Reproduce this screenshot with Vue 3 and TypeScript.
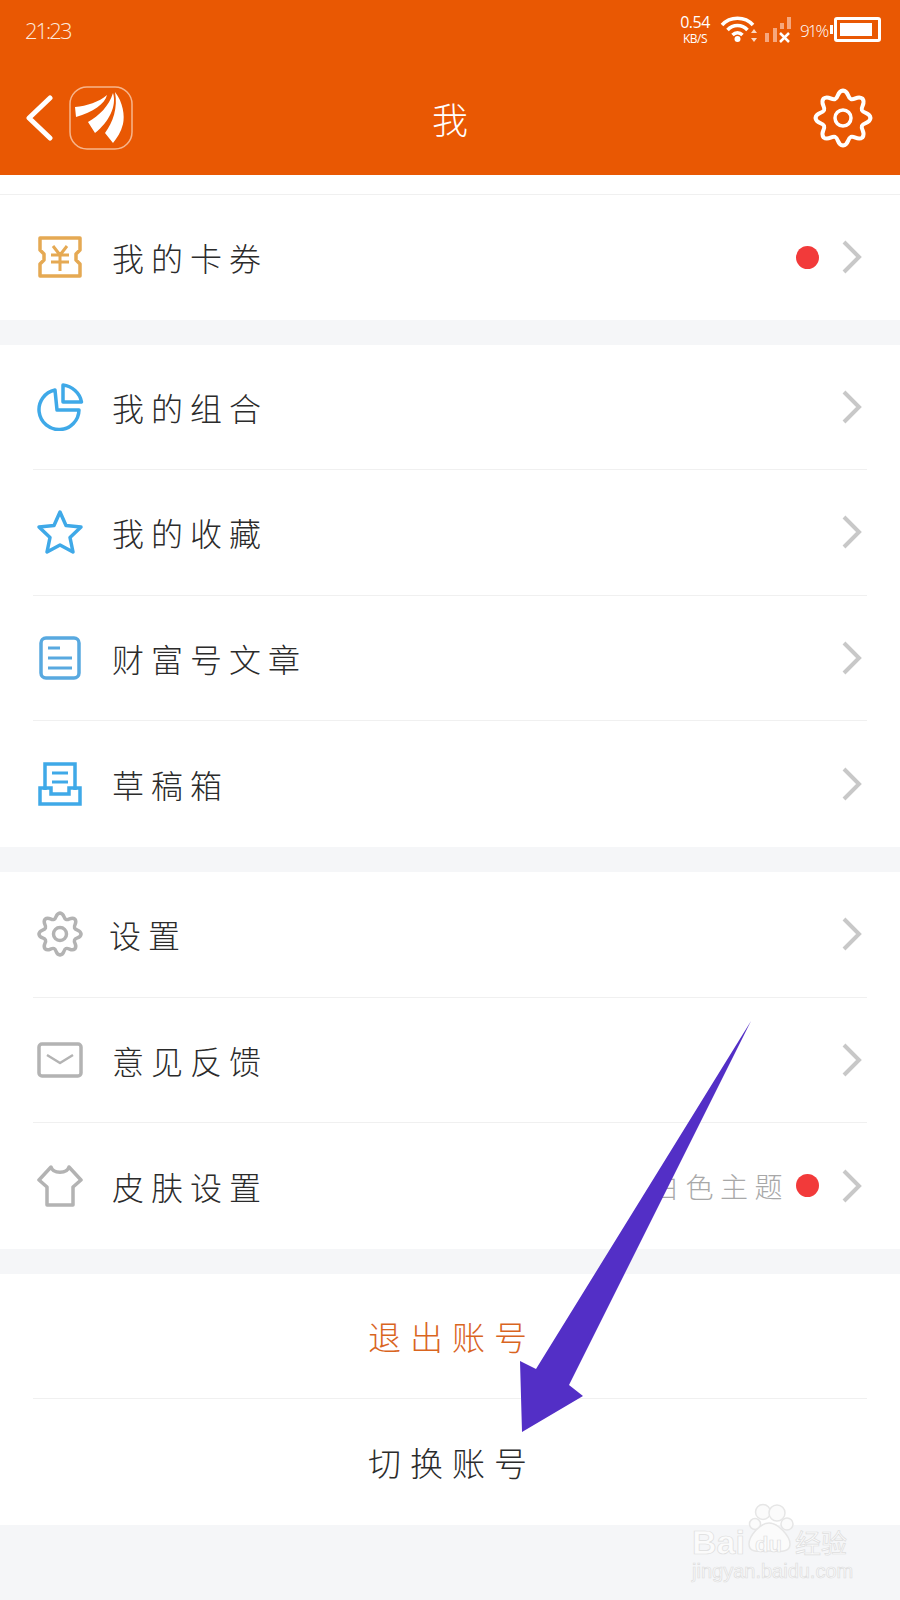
<script setup lang="ts">
interface Row {
  label: string;
  icon: string;
  dot?: boolean;
  note?: string;
}

const groups: Row[][] = [
  [{ label: '我的卡券', icon: 'ticket', dot: true }],
  [
    { label: '我的组合', icon: 'pie' },
    { label: '我的收藏', icon: 'star' },
    { label: '财富号文章', icon: 'doc' },
    { label: '草稿箱', icon: 'inbox' }
  ],
  [
    { label: '设置', icon: 'gear' },
    { label: '意见反馈', icon: 'mail' },
    { label: '皮肤设置', icon: 'shirt', note: '白色主题', dot: true }
  ]
];

// 8 lobe rounded gear, centred on 0,0 in a -30..30 box
const gearPath = (() => {
  const p = (a: number, r: number) =>
    `${(r * Math.cos(a)).toFixed(2)} ${(r * Math.sin(a)).toFixed(2)}`;
  let d = '';
  for (let i = 0; i < 8; i++) {
    const a = (i * Math.PI) / 4 - Math.PI / 2;
    d += i === 0 ? `M${p(a - 0.39, 20.5)}` : `L${p(a - 0.39, 20.5)}`;
    d += `C${p(a - 0.2, 21)} ${p(a - 0.22, 27.5)} ${p(a, 27.5)}`;
    d += `C${p(a + 0.22, 27.5)} ${p(a + 0.2, 21)} ${p(a + 0.39, 20.5)}`;
  }
  return d + 'Z';
})();
</script>

<template>
  <div class="page">
    <header class="head">
      <div class="status">
        <span class="time">21:23</span>
        <div class="status-right">
          <div class="speed"><span>0.54</span><span class="unit">KB/S</span></div>
          <svg class="wifi" width="38" height="28" viewBox="0 0 38 28">
            <path d="M2 10C10 1 25 1 33 10M7.500 15C13 9 22 9 27.500 15M12.500 20C15.500 17 19.500 17 22.500 20" fill="none" stroke="#fff" stroke-width="3.500" />
            <circle cx="17.500" cy="24" r="3" fill="#fff" />
            <path d="M34 14l3 4h-6zM34 27l3-4h-6z" fill="#fbd9c4" />
          </svg>
          <svg class="signal" width="28" height="26" viewBox="0 0 28 26">
            <rect x="1" y="16" width="4" height="9" fill="#f6a77e" />
            <rect x="9" y="11" width="4" height="14" fill="#f6a77e" />
            <rect x="16" y="6" width="4" height="6" fill="#f6a77e" />
            <rect x="23" y="0" width="4" height="12" fill="#f6a77e" />
            <path d="M16 16l9 9M25 16l-9 9" stroke="#fff" stroke-width="2.500" />
          </svg>
          <span class="pct">91%</span>
          <div class="battery"><i class="level"></i></div>
        </div>
      </div>
      <nav class="nav">
        <div class="nav-left">
          <svg width="30" height="46" viewBox="0 0 30 46">
            <path d="M26 3L5 23l21 20" fill="none" stroke="#fff" stroke-width="5" stroke-linecap="round" stroke-linejoin="round" />
          </svg>
          <svg class="logo" width="64" height="64" viewBox="0 0 64 64">
            <rect x="1" y="1" width="62" height="62" rx="17" fill="none" stroke="#f7b58c" stroke-width="1.500" />
            <path d="M6 21C18 20 30 16 38 9C36 18 24 26 7 31Z" fill="#fff" />
            <path d="M19 36C30 30 40 20 44 7C48 20 40 36 26 47Z" fill="#fff" />
            <path d="M36 47C44 36 49 22 46 6C54 16 56 30 54 38C52 46 48 52 44 57Z" fill="#fff" />
          </svg>
        </div>
        <span class="title">我</span>
        <svg class="nav-gear" width="60" height="60" viewBox="-30 -30 60 60">
          <path :d="gearPath" fill="none" stroke="#fff" stroke-width="4" stroke-linejoin="round" />
          <circle r="8" fill="none" stroke="#fff" stroke-width="3.500" />
        </svg>
      </nav>
    </header>

    <div class="top-strip"></div>

    <section v-for="(group, g) in groups" :key="g" class="group">
      <div v-for="row in group" :key="row.label" class="row">
        <div class="icon">
          <svg v-if="row.icon === 'ticket'" width="46" height="44" viewBox="0 0 46 44" fill="none" stroke="#e5a953" stroke-width="3.500" stroke-linejoin="round">
            <path d="M3 3H43V15L39 19V25L43 29V41H3V29L7 25V19L3 15Z" />
            <path d="M16 11l7 9 7-9M14 20H32M14 27H32M23 20V36" stroke-width="3" />
          </svg>
          <svg v-else-if="row.icon === 'pie'" width="48" height="48" viewBox="0 0 48 48" fill="none" stroke="#3fa9e8" stroke-width="3.500" stroke-linejoin="round">
            <path d="M19 7A20 20 0 1 0 43 27H21Z" stroke-linecap="round" />
            <path d="M27 2C36 3 44 10 45.500 19H27Z" />
          </svg>
          <svg v-else-if="row.icon === 'star'" width="48" height="46" viewBox="0 0 48 46" fill="none" stroke="#3fa9e8" stroke-width="3.500" stroke-linejoin="round">
            <path d="M24 3L30 16.500L45 18L34 28.500L37 43L24 36L11 43L14 28.500L3 18L18 16.500Z" />
          </svg>
          <svg v-else-if="row.icon === 'doc'" width="44" height="46" viewBox="0 0 44 46" fill="none" stroke="#58a9e0" stroke-width="3.500">
            <rect x="3" y="3" width="38" height="40" rx="5" />
            <path d="M10 13H22M10 23H34M10 33H34" stroke-width="3" />
          </svg>
          <svg v-else-if="row.icon === 'inbox'" width="46" height="46" viewBox="0 0 46 46" fill="none" stroke="#3fa9e8" stroke-width="3.500">
            <path d="M8 29V3H38V29" />
            <path d="M3 27H14V33H32V27H43V43H3Z" />
            <path d="M15 12H31M15 21H31" stroke-width="3" />
          </svg>
          <svg v-else-if="row.icon === 'gear'" width="46" height="46" viewBox="-30 -30 60 60">
            <path :d="gearPath" fill="none" stroke="#b3b3b3" stroke-width="4.500" stroke-linejoin="round" />
            <circle r="8.500" fill="none" stroke="#b3b3b3" stroke-width="4.500" />
          </svg>
          <svg v-else-if="row.icon === 'mail'" width="46" height="36" viewBox="0 0 46 36" fill="none" stroke="#b3b3b3" stroke-width="3.500" stroke-linejoin="round">
            <rect x="2" y="2" width="42" height="32" rx="3" />
            <path d="M10 13L23 21L36 13" stroke-width="2.500" />
          </svg>
          <svg v-else-if="row.icon === 'shirt'" width="46" height="42" viewBox="0 0 46 42" fill="none" stroke="#b3b3b3" stroke-width="3.500" stroke-linejoin="round">
            <path d="M14 2C16 9 30 9 32 2L44 15L36 22V40H10V22L2 15Z" />
          </svg>
        </div>
        <span class="label" :class="{ tight: row.label === '设置' }">{{ row.label }}</span>
        <span v-if="row.note" class="note">{{ row.note }}</span>
        <i v-if="row.dot" class="dot"></i>
        <svg class="chev" width="22" height="36" viewBox="0 0 22 36">
          <path d="M3 3L18 18L3 33" fill="none" stroke="#c8c8c8" stroke-width="4" />
        </svg>
      </div>
    </section>

    <section class="group actions">
      <div class="row center"><span class="action logout">退出账号</span></div>
      <div class="row center"><span class="action">切换账号</span></div>
    </section>

    <!-- annotation + watermark lie over the screenshot -->
    <svg class="arrow" width="900" height="1600" viewBox="0 0 900 1600">
      <path d="M751 1021L569 1385L583 1396L522 1432L520 1361L536 1369Z" fill="#532fc6" />
    </svg>
    <div class="mark">
      <svg class="paw" width="50" height="52" viewBox="0 0 50 52" fill="#fbfbfb" stroke="#e6e6e6" stroke-width="1.500">
        <circle cx="10" cy="22" r="5.500" />
        <circle cx="18" cy="10" r="7.500" />
        <circle cx="32" cy="11" r="8" />
        <circle cx="42" cy="22" r="6" />
        <path d="M24 21C33 21 45 34 45 42C45 52 32 49 24 49C16 49 4 52 4 42C4 34 15 21 24 21Z" />
      </svg>
      <span class="bai">Bai</span>
      <span class="du">du</span>
      <span class="jy">经验</span>
      <span class="site">jingyan.baidu.com</span>
    </div>
  </div>
</template>

<style scoped>
.page {
  position: relative;
  width: 900px;
  height: 1600px;
  overflow: hidden;
  background: #f5f6f8;
  font-family: "Noto Sans CJK SC", "Noto Sans", sans-serif;
  color: #333;
}
.head {
  height: 175px;
  background: #e95803;
  color: #fff;
}
.status {
  height: 60px;
  display: flex;
  justify-content: space-between;
  align-items: center;
  padding: 0 19px 0 25px;
}
.time {
  font-family: "Open Sans", sans-serif;
  font-size: 22px;
  font-weight: 300;
  letter-spacing: -2px;
  color: #fdeadd;
}
.status-right {
  display: flex;
  align-items: center;
  margin-top: -2px;
}
.speed {
  display: flex;
  flex-direction: column;
  align-items: center;
  width: 30px;
  font-family: "Open Sans", sans-serif;
  font-size: 16px;
  line-height: 19px;
  letter-spacing: -0.5px;
  margin-right: 10px;
}
.unit {
  font-size: 12px;
  line-height: 14px;
}
.wifi {
  margin-right: 6px;
}
.pct {
  width: 30px;
  font-family: "Open Sans", sans-serif;
  font-size: 17px;
  font-weight: 300;
  letter-spacing: -2px;
  white-space: nowrap;
  margin: 3px 2px 0 8px;
}
.signal {
  margin-top: 2px;
}
.battery {
  position: relative;
  width: 47px;
  height: 25px;
  box-sizing: border-box;
  border: 3px solid #fff;
  border-radius: 3px;
  padding: 3px;
  margin-left: 2px;
}
.battery::before {
  content: "";
  position: absolute;
  left: -7px;
  top: 5px;
  width: 3px;
  height: 9px;
  background: #fff;
}
.level {
  display: block;
  width: 91%;
  height: 100%;
  background: #fff;
}
.nav {
  height: 115px;
  display: grid;
  grid-template-columns: 1fr auto 1fr;
  align-items: center;
  padding: 0 27px;
}
.nav-left {
  display: flex;
  align-items: center;
  gap: 15px;
  margin-left: -3px;
}
.logo {
  display: block;
}
.title {
  font-size: 36px;
  line-height: 46px;
  font-weight: 300;
}
.nav-gear {
  justify-self: end;
}
.top-strip {
  height: 19px;
  background: #fff;
  border-bottom: 1px solid #f0f0f0;
}
.group {
  background: #fff;
  margin-bottom: 25px;
}
.group:first-of-type .row {
  height: 124.600px;
}
.row {
  display: flex;
  align-items: center;
  box-sizing: border-box;
  height: 125.600px;
  margin: 0 33px;
  border-bottom: 1px solid #f0f0f0;
}
.row:last-child {
  border-bottom: 0;
}
.icon {
  width: 54px;
  display: flex;
  justify-content: center;
  margin-right: 25px;
}
.icon svg {
  display: block;
}
.label {
  flex: 1;
  font-size: 32px;
  font-weight: 300;
  letter-spacing: 7px;
  color: #2b2b2b;
}
.tight {
  margin-left: -3px;
}
.note {
  font-size: 28px;
  font-weight: 300;
  letter-spacing: 6.500px;
  color: #a8a8a8;
  margin-right: 7px;
}
.dot {
  width: 23px;
  height: 23px;
  border-radius: 50%;
  background: #f23a3a;
  margin-right: 22px;
}
.chev {
  margin-right: 4px;
}
.actions {
  margin-bottom: 0;
}
.center {
  justify-content: center;
}
.action {
  font-size: 33px;
  font-weight: 300;
  letter-spacing: 9px;
  margin-left: 4px;
  color: #2b2b2b;
}
.logout {
  color: #d9651f;
}
.arrow {
  position: absolute;
  left: 0;
  top: 0;
  pointer-events: none;
}
.mark {
  position: absolute;
  left: 690px;
  top: 1502px;
  width: 170px;
  height: 84px;
  color: #fbfbfb;
  font-family: "Liberation Sans", sans-serif;
}
.mark span {
  position: absolute;
  white-space: nowrap;
  -webkit-text-stroke: 0.7px #dedede;
}
.paw {
  position: absolute;
  left: 55px;
  top: 0;
}
.bai {
  left: 2px;
  top: 23px;
  font-size: 34px;
  line-height: 34px;
  font-weight: 700;
}
.du {
  left: 65px;
  top: 32px;
  font-size: 22px;
  line-height: 22px;
  font-weight: 700;
}
.jy {
  left: 105px;
  top: 26px;
  font-family: "Noto Sans CJK SC", sans-serif;
  font-size: 26px;
  line-height: 28px;
}
.site {
  left: 2px;
  top: 57px;
  font-size: 20px;
  line-height: 24px;
}
</style>
